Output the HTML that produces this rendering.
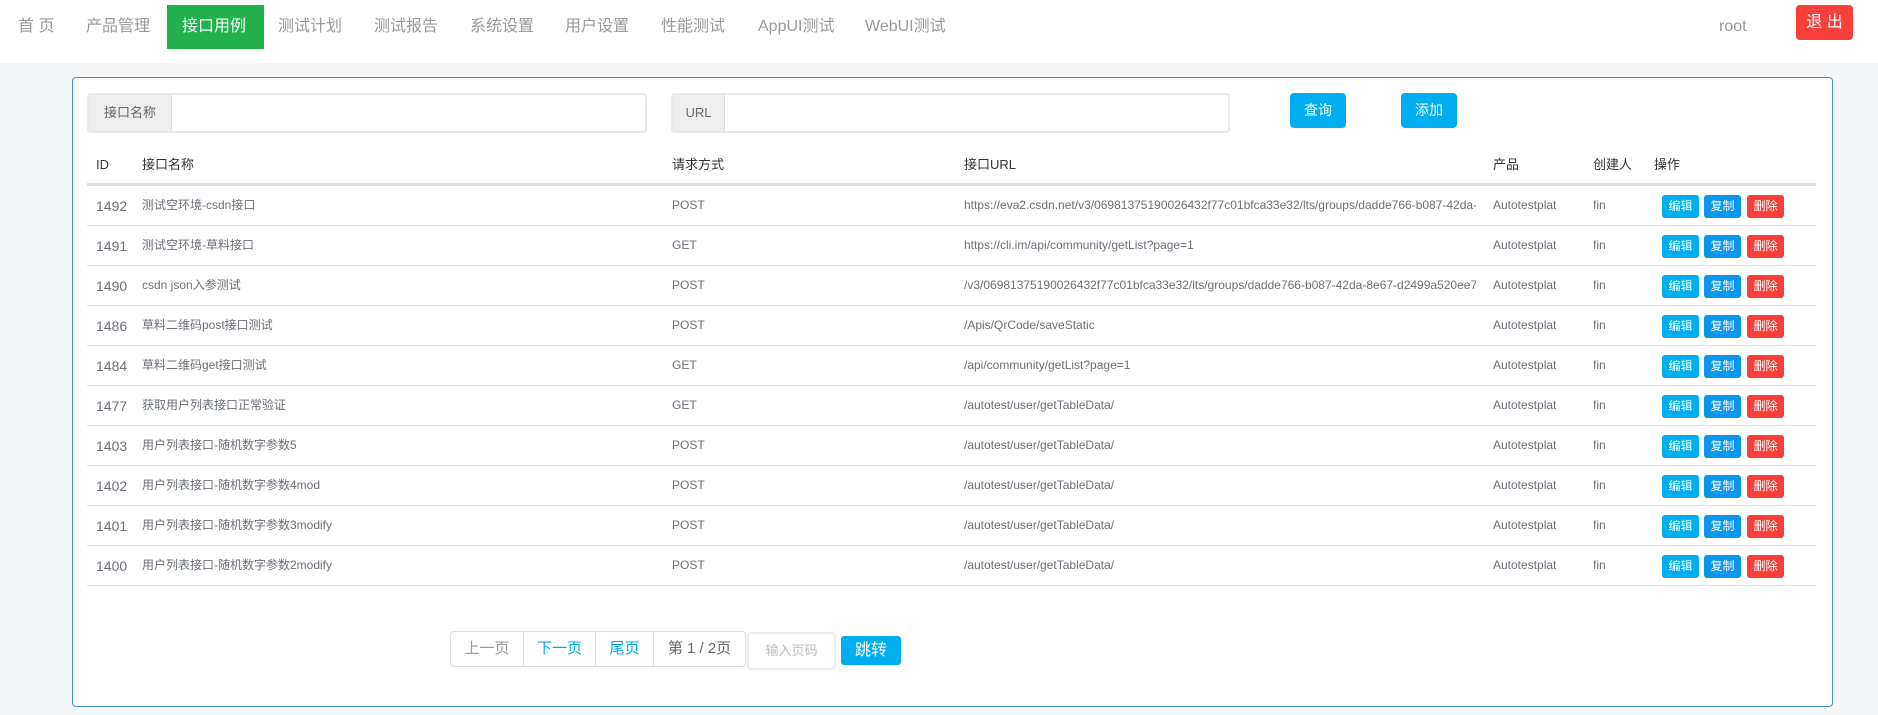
<!DOCTYPE html>
<html><head><meta charset="utf-8"><style>
*{box-sizing:border-box;margin:0;padding:0}
body{width:1878px;height:715px;background:#f4f5f7;font-family:"Liberation Sans","Noto Sans CJK SC",sans-serif;position:relative;overflow:hidden;color:#666}
.nav{position:absolute;left:0;top:0;width:1878px;height:63px;background:#fff}
.nav span{position:absolute;top:15px;font-size:16px;color:#999;line-height:24px}
.act{position:absolute;left:167px;top:5px;width:97px;height:44px;background:#22b14c}
.logout{position:absolute;left:1796px;top:5px;width:57px;height:35px;background:#f8403a;border-radius:4px;color:#fff;font-size:16px;text-align:center;line-height:35px}
.panel{position:absolute;left:72px;top:77px;width:1761px;height:630px;background:#fff;border:1px solid #4a8fd0;border-radius:4px}
.ig{position:absolute;top:93px;height:40px;border:2px solid #e8e8e8;border-radius:4px;background:#fff}
.ig .ad{position:absolute;left:0;top:0;bottom:0;background:#eee;border-right:1px solid #ddd;font-size:13px;color:#666;line-height:36px;text-align:center}
.btn{position:absolute;top:93px;height:35px;width:56px;background:#00aeef;border-radius:4px;color:#fff;font-size:14px;text-align:center;line-height:35px}
.th{position:absolute;top:156px;font-size:13px;color:#333;line-height:18px}
.hl{position:absolute;left:87px;width:1729px;top:183px;height:3px;background:#ddd}
.row{position:absolute;left:87px;width:1729px;height:40px;border-bottom:1px solid #e3e3e3}
.row div{position:absolute;top:11px;font-size:12px;line-height:16px;color:#6a7078;white-space:nowrap;overflow:hidden}
.row .id{font-size:14px;top:12px;left:9px}
.b{position:absolute;top:9px;height:23px;width:37px;border-radius:3px;color:#fff;font-size:12px;text-align:center;line-height:23px}
.pg{position:absolute;top:631px;height:36px;border:1px solid #ddd;font-size:15px;line-height:34px;text-align:center}
</style></head><body>
<div class="nav">
<div class="act"></div>
<span style="left:18px">首 页</span>
<span style="left:86px">产品管理</span>
<span style="left:182px;color:#fff">接口用例</span>
<span style="left:278px">测试计划</span>
<span style="left:374px">测试报告</span>
<span style="left:470px">系统设置</span>
<span style="left:565px">用户设置</span>
<span style="left:661px">性能测试</span>
<span style="left:758px">AppUI测试</span>
<span style="left:865px">WebUI测试</span>
<span style="left:1719px;top:15px">root</span>
<div class="logout">退 出</div>
</div>
<div class="panel"></div>
<div class="ig" style="left:87px;width:560px"><div class="ad" style="width:83px">接口名称</div></div>
<div class="ig" style="left:671px;width:559px"><div class="ad" style="width:52px">URL</div></div>
<div class="btn" style="left:1290px">查询</div>
<div class="btn" style="left:1401px">添加</div>
<div class="th" style="left:96px">ID</div>
<div class="th" style="left:142px">接口名称</div>
<div class="th" style="left:672px">请求方式</div>
<div class="th" style="left:964px">接口URL</div>
<div class="th" style="left:1493px">产品</div>
<div class="th" style="left:1593px">创建人</div>
<div class="th" style="left:1654px">操作</div>
<div class="hl"></div>
<div class="row" style="top:186px"><div class="id">1492</div><div style="left:55px">测试空环境-csdn接口</div><div style="left:585px">POST</div><div style="left:877px;width:512px">https://eva2.csdn.net/v3/06981375190026432f77c01bfca33e32/lts/groups/dadde766-b087-42da-8e67-d2499a520ee7</div><div style="left:1406px">Autotestplat</div><div style="left:1506px">fin</div><span class="b" style="left:1575px;background:#00aeef">编辑</span><span class="b" style="left:1617px;background:#0896ee">复制</span><span class="b" style="left:1660px;background:#f8403a">删除</span></div>
<div class="row" style="top:226px"><div class="id">1491</div><div style="left:55px">测试空环境-草料接口</div><div style="left:585px">GET</div><div style="left:877px;width:512px">https://cli.im/api/community/getList?page=1</div><div style="left:1406px">Autotestplat</div><div style="left:1506px">fin</div><span class="b" style="left:1575px;background:#00aeef">编辑</span><span class="b" style="left:1617px;background:#0896ee">复制</span><span class="b" style="left:1660px;background:#f8403a">删除</span></div>
<div class="row" style="top:266px"><div class="id">1490</div><div style="left:55px">csdn json入参测试</div><div style="left:585px">POST</div><div style="left:877px;width:512px">/v3/06981375190026432f77c01bfca33e32/lts/groups/dadde766-b087-42da-8e67-d2499a520ee7</div><div style="left:1406px">Autotestplat</div><div style="left:1506px">fin</div><span class="b" style="left:1575px;background:#00aeef">编辑</span><span class="b" style="left:1617px;background:#0896ee">复制</span><span class="b" style="left:1660px;background:#f8403a">删除</span></div>
<div class="row" style="top:306px"><div class="id">1486</div><div style="left:55px">草料二维码post接口测试</div><div style="left:585px">POST</div><div style="left:877px;width:512px">/Apis/QrCode/saveStatic</div><div style="left:1406px">Autotestplat</div><div style="left:1506px">fin</div><span class="b" style="left:1575px;background:#00aeef">编辑</span><span class="b" style="left:1617px;background:#0896ee">复制</span><span class="b" style="left:1660px;background:#f8403a">删除</span></div>
<div class="row" style="top:346px"><div class="id">1484</div><div style="left:55px">草料二维码get接口测试</div><div style="left:585px">GET</div><div style="left:877px;width:512px">/api/community/getList?page=1</div><div style="left:1406px">Autotestplat</div><div style="left:1506px">fin</div><span class="b" style="left:1575px;background:#00aeef">编辑</span><span class="b" style="left:1617px;background:#0896ee">复制</span><span class="b" style="left:1660px;background:#f8403a">删除</span></div>
<div class="row" style="top:386px"><div class="id">1477</div><div style="left:55px">获取用户列表接口正常验证</div><div style="left:585px">GET</div><div style="left:877px;width:512px">/autotest/user/getTableData/</div><div style="left:1406px">Autotestplat</div><div style="left:1506px">fin</div><span class="b" style="left:1575px;background:#00aeef">编辑</span><span class="b" style="left:1617px;background:#0896ee">复制</span><span class="b" style="left:1660px;background:#f8403a">删除</span></div>
<div class="row" style="top:426px"><div class="id">1403</div><div style="left:55px">用户列表接口-随机数字参数5</div><div style="left:585px">POST</div><div style="left:877px;width:512px">/autotest/user/getTableData/</div><div style="left:1406px">Autotestplat</div><div style="left:1506px">fin</div><span class="b" style="left:1575px;background:#00aeef">编辑</span><span class="b" style="left:1617px;background:#0896ee">复制</span><span class="b" style="left:1660px;background:#f8403a">删除</span></div>
<div class="row" style="top:466px"><div class="id">1402</div><div style="left:55px">用户列表接口-随机数字参数4mod</div><div style="left:585px">POST</div><div style="left:877px;width:512px">/autotest/user/getTableData/</div><div style="left:1406px">Autotestplat</div><div style="left:1506px">fin</div><span class="b" style="left:1575px;background:#00aeef">编辑</span><span class="b" style="left:1617px;background:#0896ee">复制</span><span class="b" style="left:1660px;background:#f8403a">删除</span></div>
<div class="row" style="top:506px"><div class="id">1401</div><div style="left:55px">用户列表接口-随机数字参数3modify</div><div style="left:585px">POST</div><div style="left:877px;width:512px">/autotest/user/getTableData/</div><div style="left:1406px">Autotestplat</div><div style="left:1506px">fin</div><span class="b" style="left:1575px;background:#00aeef">编辑</span><span class="b" style="left:1617px;background:#0896ee">复制</span><span class="b" style="left:1660px;background:#f8403a">删除</span></div>
<div class="row" style="top:546px"><div class="id">1400</div><div style="left:55px">用户列表接口-随机数字参数2modify</div><div style="left:585px">POST</div><div style="left:877px;width:512px">/autotest/user/getTableData/</div><div style="left:1406px">Autotestplat</div><div style="left:1506px">fin</div><span class="b" style="left:1575px;background:#00aeef">编辑</span><span class="b" style="left:1617px;background:#0896ee">复制</span><span class="b" style="left:1660px;background:#f8403a">删除</span></div>
<div class="pg" style="left:450px;width:74px;color:#999;border-radius:4px 0 0 4px">上一页</div>
<div class="pg" style="left:523px;width:73px;color:#00a8ec">下一页</div>
<div class="pg" style="left:595px;width:59px;color:#00a8ec">尾页</div>
<div class="pg" style="left:653px;width:93px;color:#666;border-radius:0 4px 4px 0">第 1 / 2页</div>
<div class="pg" style="left:747px;top:632px;width:89px;height:38px;border:2px solid #eee;border-radius:4px;color:#bbb;font-size:13px">输入页码</div>
<div style="position:absolute;left:841px;top:636px;width:60px;height:29px;background:#00aeef;border-radius:3px;color:#fff;font-size:16px;text-align:center;line-height:29px">跳转</div>
</body></html>
